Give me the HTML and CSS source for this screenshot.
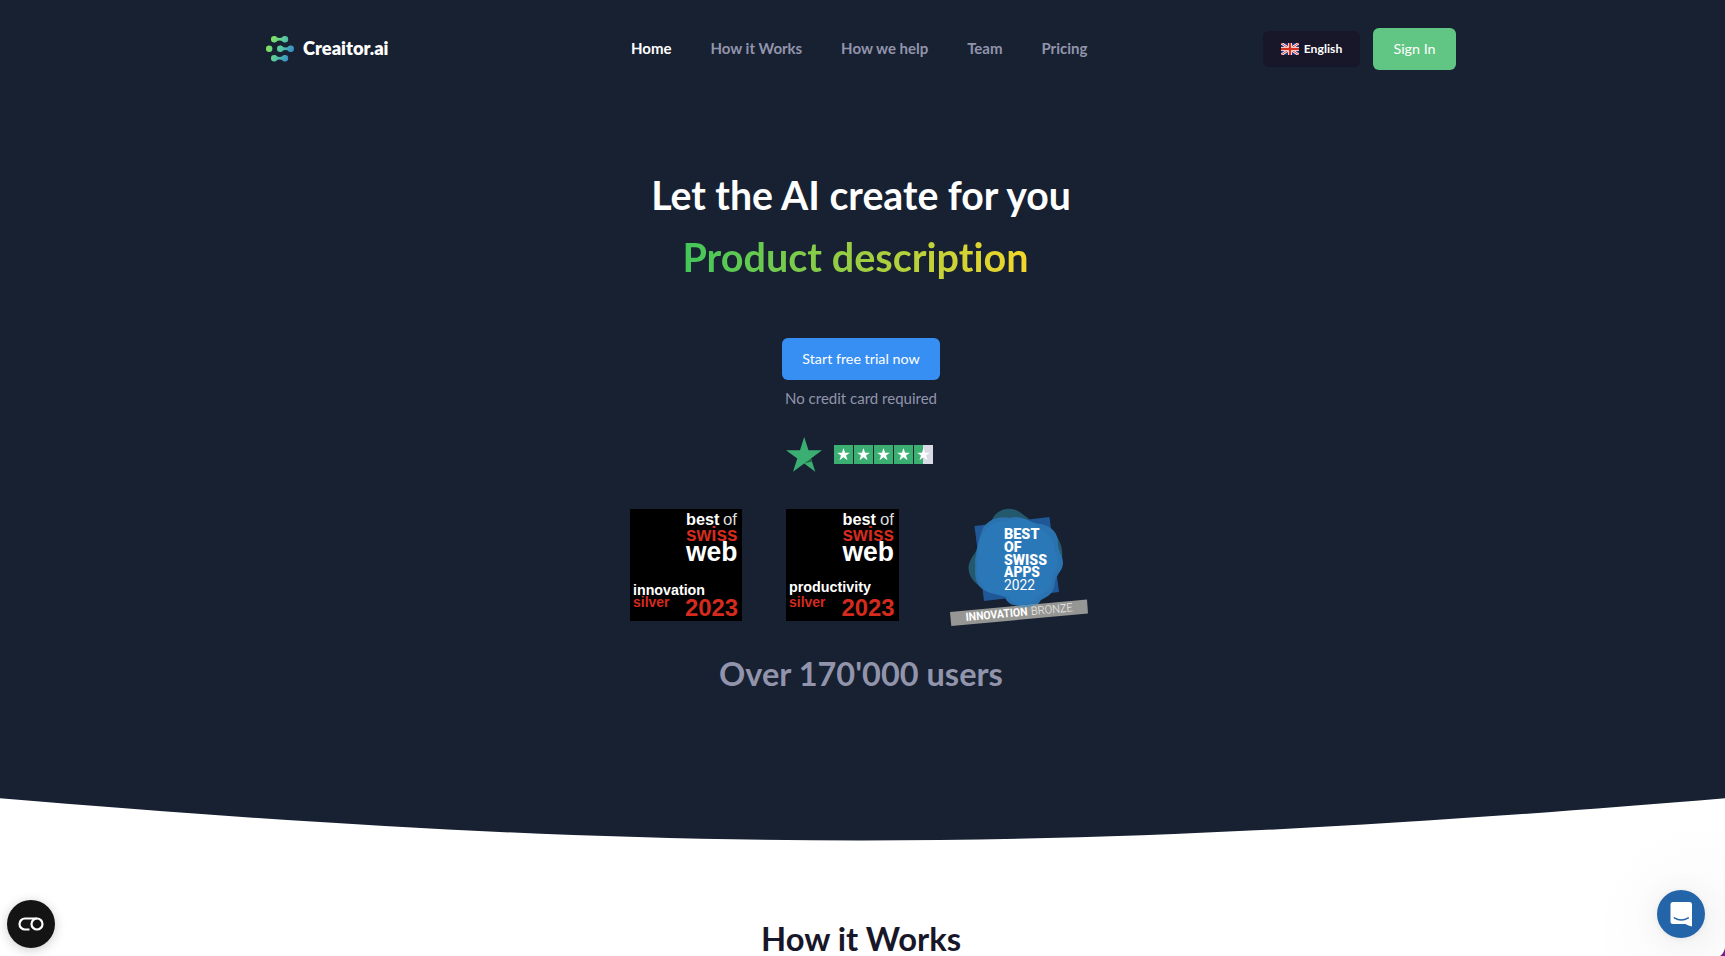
FILE: index.html
```html
<!DOCTYPE html>
<html lang="en">
<head>
<meta charset="utf-8">
<title>Creaitor.ai</title>
<link rel="stylesheet" href="styles.css">
</head>
<body>
<div class="page">
  <svg class="defs" width="0" height="0" aria-hidden="true">
    <defs>
      <linearGradient id="lg" gradientUnits="userSpaceOnUse" x1="2" y1="6" x2="26" y2="18"><stop offset="0" stop-color="#86e557"/><stop offset=".5" stop-color="#58c9a0"/><stop offset="1" stop-color="#3789cc"/></linearGradient>
      <symbol id="star" viewBox="0 0 20 20"><path d="M10 3.200l1.650 4.900h5.100l-4.100 3 1.600 4.900L10 13l-4.250 3 1.600-4.900-4.100-3h5.100z" fill="#fff"/></symbol>
    </defs>
  </svg>
  <section class="hero">
    <header class="header">
      <a class="brand">
        <svg width="28" height="26" viewBox="0 0 28 26" fill="url(#lg)">
          <circle cx="8.200" cy="3.200" r="3.200"/><circle cx="19" cy="3.200" r="3.200"/><path d="M8.200 0Q10.500 2 13.600 2T19 0V6.400Q16.700 4.400 13.600 4.400T8.200 6.400z"/>
          <circle cx="3.200" cy="12.700" r="3.200"/>
          <circle cx="14.200" cy="12.700" r="3.200"/><circle cx="24.800" cy="12.700" r="3.200"/><path d="M14.200 9.500Q16.500 11.500 19.600 11.500T24.800 9.500V15.900Q22.700 13.900 19.600 13.900T14.200 15.900z"/>
          <circle cx="8.200" cy="22.200" r="3.200"/><circle cx="19" cy="22.200" r="3.200"/><path d="M8.200 19Q10.500 21 13.600 21T19 19V25.400Q16.700 23.400 13.600 23.400T8.200 25.400z"/>
        </svg>
        <span>Creaitor.ai</span>
      </a>
      <nav class="nav">
        <a class="active">Home</a><a>How it Works</a><a>How we help</a><a>Team</a><a>Pricing</a>
      </nav>
      <div class="actions">
        <a class="lang">
          <svg width="18" height="12" viewBox="0 0 18 12"><path fill="#25307c" d="M0 0h18v12H0z"/><path d="M0 0l18 12M18 0L0 12" stroke="#fff" stroke-width="2.600"/><path d="M0 0l18 12M18 0L0 12" stroke="#e0382c" stroke-width="1"/><path d="M9 0v12M0 6h18" stroke="#fff" stroke-width="4"/><path d="M9 0v12M0 6h18" stroke="#d8301f" stroke-width="2.400"/></svg>
          <span>English</span>
        </a>
        <a class="btn signin"><span>Sign In</span></a>
      </div>
    </header>
    <main class="intro">
      <h1>Let the AI create for you</h1>
      <div class="typed">Product description</div>
      <a class="btn trial"><span>Start free trial now</span></a>
      <p class="note">No credit card required</p>
      <div class="rating">
        <svg width="36" height="35" viewBox="0 0 36 35"><path fill="#3bae72" d="M18.200 0l4.300 13.300H36L25 21.600 29.300 34.800 18.200 26.600 7 34.800l4.300-13.200L0 13.300h14z"/><path fill="#1d6b44" d="M26.200 24.500l-8 2.100L25 21.600z"/></svg>
        <div class="boxes">
          <svg viewBox="0 0 20 20"><use href="#star"/></svg><svg viewBox="0 0 20 20"><use href="#star"/></svg><svg viewBox="0 0 20 20"><use href="#star"/></svg><svg viewBox="0 0 20 20"><use href="#star"/></svg><svg class="half" viewBox="0 0 20 20"><use href="#star"/></svg>
        </div>
      </div>
      <div class="awards">
        <svg class="web" width="112" height="112" viewBox="0 0 112 112">
          <rect width="112" height="112"/>
          <text x="56" y="15.500" font-size="16" font-weight="700" textLength="33.500" lengthAdjust="spacingAndGlyphs" fill="#fff">best</text><text x="93" y="15.500" font-size="16" textLength="14" lengthAdjust="spacingAndGlyphs" fill="#ddd">of</text>
          <text x="56" y="31.500" font-size="19.500" font-weight="700" textLength="51.500" lengthAdjust="spacingAndGlyphs" fill="#d52b1e">swiss</text>
          <text x="56" y="52" font-size="27.500" font-weight="700" textLength="51.500" lengthAdjust="spacingAndGlyphs" fill="#fff">web</text>
          <text x="3" y="86" font-size="14.500" font-weight="700" textLength="72" lengthAdjust="spacingAndGlyphs" fill="#fff">innovation</text>
          <text x="3" y="97.500" font-size="14.500" font-weight="700" textLength="36.500" lengthAdjust="spacingAndGlyphs" fill="#d52b1e">silver</text>
          <text x="55" y="106.500" font-size="24.500" font-weight="700" textLength="53" lengthAdjust="spacingAndGlyphs" fill="#d52b1e">2023</text>
        </svg>
        <svg class="web" width="113" height="112" viewBox="0 0 113 112">
          <rect width="113" height="112"/>
          <text x="56.500" y="15.500" font-size="16" font-weight="700" textLength="33.500" lengthAdjust="spacingAndGlyphs" fill="#fff">best</text><text x="94" y="15.500" font-size="16" textLength="14" lengthAdjust="spacingAndGlyphs" fill="#ddd">of</text>
          <text x="56.500" y="31.500" font-size="19.500" font-weight="700" textLength="51.500" lengthAdjust="spacingAndGlyphs" fill="#d52b1e">swiss</text>
          <text x="56.500" y="52" font-size="27.500" font-weight="700" textLength="51.500" lengthAdjust="spacingAndGlyphs" fill="#fff">web</text>
          <text x="3" y="82.500" font-size="14.500" font-weight="700" textLength="82" lengthAdjust="spacingAndGlyphs" fill="#fff">productivity</text>
          <text x="3" y="97.500" font-size="14.500" font-weight="700" textLength="36.500" lengthAdjust="spacingAndGlyphs" fill="#d52b1e">silver</text>
          <text x="55.500" y="106.500" font-size="24.500" font-weight="700" textLength="53" lengthAdjust="spacingAndGlyphs" fill="#d52b1e">2023</text>
        </svg>
        <svg class="apps" width="138" height="119" viewBox="0 0 138 119">
          <path fill="#24586c" d="M42 12C46 2 58-2 68 3C76 8 84 16 94 20C106 23 114 36 112 50L105 76C98 94 60 96 40 84C28 78 16 70 19 56C22 47 27 45 28 36C29 22 36 24 42 12Z"/>
          <path fill="#205796" d="M24.500 18L99.500 9 109 84 34 93z"/>
          <path fill="#2b72b0" d="M33 20C41 9 50 9 60 10C72 6 79 15 91 16C102 18 109 26 108 37C109 45 113 48 113 55C113 63 106 66 105 74C104 85 99 88 91 92C85 102 77 100 71 98C64 98 57 96 55 89C45 85 36 86 29 78C23 70 26 62 25 54C26 44 29 29 33 20Z"/>
          <path fill="#2b7bba" opacity=".75" d="M34 24C42 12 54 13 65 12C78 7 85 18 91 21C102 28 105 35 104 43C110 51 108 61 103 67C102 79 97 85 87 89C79 100 65 99 59 89C48 86 36 87 31 76C25 66 27 57 28 48C27 38 29 30 34 24Z"/>
          <g fill="#fff" font-weight="900" font-size="15"><text x="54" y="30.500" textLength="35.500" lengthAdjust="spacingAndGlyphs">BEST</text><text x="54" y="43.500" textLength="17.500" lengthAdjust="spacingAndGlyphs">OF</text><text x="54" y="56.500" textLength="43" lengthAdjust="spacingAndGlyphs">SWISS</text><text x="54" y="69.300" textLength="36" lengthAdjust="spacingAndGlyphs">APPS</text><text x="54" y="82" font-weight="400" textLength="31" lengthAdjust="spacingAndGlyphs">2022</text></g>
          <path fill="#969794" d="M0 104L137 91.500 138 105.500 1.300 118z"/>
          <path fill="#5d91b2" d="M66 98L88 96Q76 102 66 98z"/>
          <g transform="rotate(-5.200 16 113)" fill="#fff"><text x="16" y="113" font-size="11.500" font-weight="700" textLength="62" lengthAdjust="spacingAndGlyphs">INNOVATION</text><text x="81.500" y="113" font-size="11.500" font-weight="300" fill="#eee" textLength="42" lengthAdjust="spacingAndGlyphs">BRONZE</text></g>
        </svg>
      </div>
      <h2 class="users">Over 170'000 users</h2>
    </main>
  </section>
  <svg class="curve" viewBox="15 12 1470 48" preserveAspectRatio="none"><path fill="#172132" d="M0 11C3.936 11.336 7.860 11.669 11.773 12H1488.160C1492.100 11.669 1496.040 11.336 1500 11V12H1488.160C913.668 60.348 586.282 60.612 11.773 12H0V11Z"/></svg>
  <h2 class="how">How it Works</h2>
  <div class="glow"></div>
  <div class="float consent"><svg width="26" height="14" viewBox="0 0 26 14" fill="none" stroke="#fff" stroke-width="2.200"><path d="M19 1.500H7a5.500 5.500 0 0 0 0 11H11.500"/><circle cx="19" cy="7" r="5.500"/></svg></div>
  <div class="float chat"><svg width="23" height="25" viewBox="0 0 23 25"><path fill="#fff" d="M3 0H19.500Q22 0 22 2.500V24.500Q18 23.500 15.500 22H3Q.500 22 .500 19.500V2.500Q.500 0 3 0Z"/><path d="M4.300 15.800Q11.300 20.300 18.300 15.800" fill="none" stroke="#2464a9" stroke-width="1.400" stroke-linecap="round"/></svg></div>
  <svg class="corner" width="5" height="8" viewBox="0 0 5 8"><path fill="#7a1a8e" d="M5 0V8H0Q4 5 5 0Z"/></svg>
</div>
</body>
</html>
```
FILE: styles.css
```css
* { box-sizing: border-box; }
body { margin: 0; font-family: Lato, "Liberation Sans", sans-serif; font-variant-ligatures: none; background: #fff; }
h1, h2, p { margin: 0; }
.page { position: relative; height: 956px; overflow: hidden; }
.defs { position: absolute; }
.hero { height: 798px; background: #172132; }
.header { width: 1190px; height: 98px; margin: 0 auto; position: relative; left: -1.5px; display: grid; grid-template-columns: 365px 1fr auto; align-items: center; }
.brand { display: flex; align-items: center; gap: 9px; color: #fff; font-size: 18.300px; font-weight: 800; }
.brand svg { display: block; }
.brand span { padding-bottom: 2px; }
.nav { display: flex; gap: 38.900px; padding-bottom: 2px; font-size: 15px; font-weight: 700; color: #9294ab; white-space: nowrap; }
.nav .active { color: #fff; }
.actions { display: flex; align-items: center; gap: 13px; }
.lang { width: 97px; height: 36px; border-radius: 6px; background: #181729; color: #fff; display: flex; align-items: center; justify-content: center; gap: 5px; font-size: 12.200px; font-weight: 700; }
.lang span { padding-bottom: 1px; }
.btn { display: flex; align-items: center; justify-content: center; height: 42px; border-radius: 6px; color: #fff; font-size: 14.300px; }
.btn span { padding-bottom: 2px; }
.signin { width: 83px; background: #61c684; }
.intro { display: flex; flex-direction: column; align-items: center; padding: 66px 3px 0 0; white-space: nowrap; }
h1 { height: 62px; line-height: 62px; font-size: 39.200px; font-weight: 700; color: #fff; }
.typed { height: 62px; line-height: 62px; margin-right: 11px; font-size: 39.600px; font-weight: 700; color: transparent; background: linear-gradient(to right, #41c65a, #f4d62a); -webkit-background-clip: text; background-clip: text; }
.trial { width: 158px; margin-top: 50px; background: #378ff4; }
.note { margin-top: 7px; height: 22px; line-height: 22px; font-size: 15px; color: #9294ab; }
.rating { display: flex; align-items: center; gap: 12px; height: 35px; margin: 28px 3px 0 0; }
.boxes { display: flex; gap: 1px; margin-bottom: 1px; }
.boxes svg { width: 19px; height: 19px; background: #3bae72; }
.boxes .half { background: linear-gradient(to right, #3bae72 50%, #d9dae5 50%); }
.awards { display: flex; margin: 37px 5px 0 0; height: 120px; }
.web { margin-right: 44px; font-family: "Liberation Sans", Arial, sans-serif; }
.web + .apps { margin: -1px 0 0 7px; }
.apps { font-family: Roboto, sans-serif; }
.users { margin-top: 20px; height: 50px; line-height: 50px; font-size: 32.500px; font-weight: 700; color: #9294ab; }
.curve { display: block; width: 100%; height: 56px; }
.how { margin-top: 60px; padding-right: 3px; line-height: 50px; text-align: center; font-size: 32.700px; font-weight: 700; color: #181729; }
.float { position: absolute; width: 48px; height: 48px; border-radius: 50%; display: flex; align-items: center; justify-content: center; }
.consent { left: 7px; bottom: 8px; background: #141414; box-shadow: 0 2px 12px rgba(0,0,0,.2); }
.chat { right: 20px; bottom: 18px; background: #2464a9; box-shadow: 0 1px 6px rgba(0,0,0,.06), 0 2px 32px rgba(0,0,0,.06); }
.glow { position: absolute; right: 0; bottom: 0; width: 125px; height: 130px; background: radial-gradient(ellipse at 80% 80%, rgba(0,0,0,.025), transparent 75%); }
.corner { position: absolute; right: 0; bottom: 0; }
```
